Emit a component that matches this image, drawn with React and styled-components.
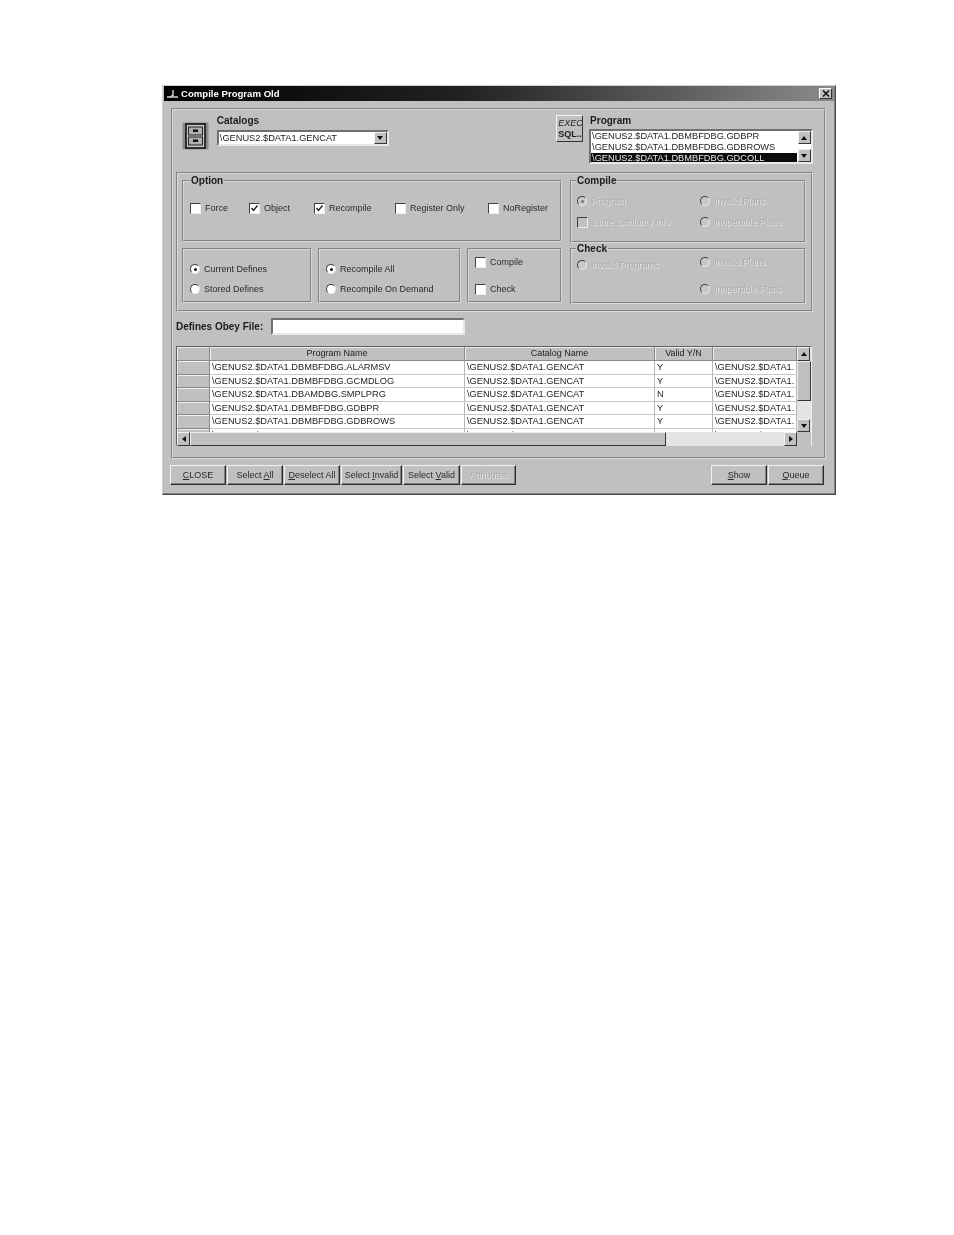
import React from "react";
import styled, { createGlobalStyle } from "styled-components";

const GlobalStyle = createGlobalStyle`
  html, body { margin: 0; background: #fff; }
  body { font-family: "Liberation Sans", Arial, sans-serif; }
`;

const Page = styled.div`
  width: 954px;
  height: 1235px;
  padding: 85px 0 0 162px;
  box-sizing: border-box;
`;

const Dialog = styled.div`
  width: 674px;
  height: 410px;
  box-sizing: border-box;
  background: #c0c0c0;
  border: 1px solid #4a4a4a;
  border-top-color: #d0d0d0;
  border-left-color: #d0d0d0;
  box-shadow: inset -1px -1px 0 #808080;
  padding: 0 1px;
  color: #1c1c1c;
  font-size: 9px;
  filter: blur(0.6px);
`;

const TitleBar = styled.div`
  height: 15px;
  display: flex;
  align-items: center;
  gap: 2px;
  padding: 0 2px;
  background: linear-gradient(90deg, #000 0%, #222 45%, #8a8a8a 100%);
  color: #fff;
  font-size: 9.6px;
  font-weight: 700;
`;

const TitleText = styled.span`
  flex: 1;
`;

const CloseBox = styled.div`
  width: 13px;
  height: 11px;
  background: #c0c0c0;
  border: 1px solid;
  border-color: #fff #333 #333 #fff;
  box-sizing: border-box;
  display: flex;
  align-items: center;
  justify-content: center;
`;

const Panel = styled.div`
  margin: 7px 8px 0 7px;
  height: 351px;
  box-sizing: border-box;
  border: 2px groove #d8d8d8;
  padding: 0 11px 0 3px;
`;

const TopRow = styled.div`
  height: 62px;
  display: flex;
`;

const CabinetSlot = styled.div`
  width: 35px;
  margin: 12px 0 0 6px;
`;

const CatalogBlock = styled.div`
  width: 341px;
  padding-top: 5px;
`;

const FieldLabel = styled.div`
  font-weight: 700;
  font-size: 10px;
  height: 14px;
  line-height: 12px;
`;

const Sunken = styled.div`
  box-sizing: border-box;
  background: #fff;
  border: 2px solid;
  border-color: #707070 #e8e8e8 #e8e8e8 #707070;
`;

const ComboBox = styled(Sunken)`
  width: 172px;
  height: 16px;
  margin-top: 1px;
  display: flex;
  align-items: center;
  padding-left: 1px;
  font-size: 9.25px;
  line-height: 12px;
  white-space: nowrap;
  justify-content: space-between;
`;

const ArrowButton = styled.div`
  width: 13px;
  height: ${(p) => p.$h || 13}px;
  flex: none;
  box-sizing: border-box;
  background: #c0c0c0;
  border: 1px solid;
  border-color: #f0f0f0 #333 #333 #f0f0f0;
  display: flex;
  align-items: center;
  justify-content: center;
`;

const Arrow = styled.span`
  width: 0;
  height: 0;
  border: 3px solid transparent;
  ${(p) => p.$dir === "down" && "border-top: 4px solid #111; border-bottom: 0;"}
  ${(p) => p.$dir === "up" && "border-bottom: 4px solid #111; border-top: 0;"}
  ${(p) => p.$dir === "left" && "border-right: 4px solid #111; border-left: 0;"}
  ${(p) => p.$dir === "right" && "border-left: 4px solid #111; border-right: 0;"}
`;

const ExecButton = styled.div`
  width: 27px;
  height: 27px;
  margin: 5px 7px 0 0;
  box-sizing: border-box;
  border: 1px solid;
  border-color: #f4f4f4 #333 #333 #f4f4f4;
  font-size: 9px;
  line-height: 11px;
  font-weight: 700;
  overflow: hidden;
  white-space: nowrap;
  padding: 2px 0 0 1px;
`;

const ExecTop = styled.div`
  font-style: italic;
  font-weight: 400;
`;

const ProgramBlock = styled.div`
  width: 224px;
  padding-top: 5px;
`;

const ProgramList = styled(Sunken)`
  height: 35px;
  margin-left: -1px;
  display: flex;
  overflow: hidden;
`;

const ProgramLines = styled.div`
  flex: 1;
  min-width: 0;
`;

const ProgramLine = styled.div`
  height: 11px;
  line-height: 11px;
  font-size: 9.25px;
  padding-left: 1px;
  white-space: nowrap;
  background: ${(p) => (p.$selected ? "#0c0c0c" : "transparent")};
  color: ${(p) => (p.$selected ? "#e8e8e8" : "#1c1c1c")};
`;

const ProgramScroll = styled.div`
  width: 14px;
  display: flex;
  flex-direction: column;
  justify-content: space-between;
  align-items: center;
  background: #fff;
`;

const OptionsPanel = styled.div`
  height: 140px;
  box-sizing: border-box;
  border: 2px groove #d8d8d8;
  padding: 1px 4px 0 4px;
  display: grid;
  grid-template-columns: 380px 236px;
  column-gap: 8px;
  align-content: start;
`;

const LeftColumn = styled.div`
  display: flex;
  flex-direction: column;
  gap: 6px;
`;

const RightColumn = styled.div`
  display: flex;
  flex-direction: column;
`;

const Group = styled.fieldset`
  margin: 0;
  min-width: 0;
  box-sizing: border-box;
  height: ${(p) => p.$h}px;
  border: 2px groove #d8d8d8;
  padding: 0 0 0 6px;
`;

const GroupTitle = styled.legend`
  font-weight: 700;
  font-size: 10px;
  line-height: 12px;
  padding: 0 1px;
  margin-left: ${(p) => p.$shift || 0}px;
  color: #1c1c1c;
`;

const OptionRow = styled.div`
  display: flex;
  padding-top: 15px;
`;

const OptionCell = styled.div`
  width: ${(p) => p.$w}px;
  flex: none;
`;

const SubRow = styled.div`
  display: flex;
  gap: 6px;
`;

const SubBox = styled.div`
  width: ${(p) => p.$w}px;
  height: 55px;
  box-sizing: border-box;
  border: 2px groove #d8d8d8;
  padding: ${(p) => p.$top}px 0 0 6px;
  display: flex;
  flex-direction: column;
  gap: ${(p) => p.$gap}px;
`;

const CheckRow = styled.div`
  display: flex;
  align-items: center;
  height: 12px;
  gap: 4px;
  margin-top: ${(p) => p.$drop || 0}px;
  white-space: nowrap;
  color: ${(p) => (p.$off ? "#acacac" : "#2a2a2a")};
  text-shadow: ${(p) => (p.$off ? "1px 1px 0 #e2e2e2" : "none")};
`;

const CheckMark = styled.span`
  width: 11px;
  height: 11px;
  flex: none;
  box-sizing: border-box;
  background: ${(p) => (p.$off ? "#c0c0c0" : "#fff")};
  border: 1px solid;
  border-color: #404040 #eee #eee #404040;
  display: flex;
  align-items: center;
  justify-content: center;
`;

const RadioMark = styled.span`
  width: 10px;
  height: 10px;
  flex: none;
  box-sizing: border-box;
  border-radius: 50%;
  background: ${(p) => (p.$off ? "#c8c8c8" : "#fff")};
  border: 1.5px solid;
  border-color: #404040 #e8e8e8 #e8e8e8 #404040;
  display: flex;
  align-items: center;
  justify-content: center;
`;

const RadioDot = styled.span`
  width: 3px;
  height: 3px;
  border-radius: 50%;
  background: ${(p) => (p.$off ? "#777" : "#111")};
`;

const PlanGrid = styled.div`
  display: grid;
  grid-template-columns: 123px 1fr;
  align-items: start;
  margin-left: -1px;
  row-gap: ${(p) => p.$gap}px;
  padding-top: ${(p) => p.$top}px;
`;

const ObeyRow = styled.div`
  display: flex;
  align-items: center;
  height: 17px;
  margin-top: 6px;
  font-weight: 700;
  font-size: 10px;
  gap: 8px;
`;

const ObeyInput = styled(Sunken)`
  width: 194px;
  height: 17px;
`;

const DataGrid = styled.div`
  width: 636px;
  height: 100px;
  margin-top: 11px;
  box-sizing: border-box;
  border: 1px solid;
  border-color: #606060 #eee #eee #606060;
  display: grid;
  grid-template-columns: 620px 14px;
  grid-template-rows: 85px 14px;
`;

const GridBody = styled.div`
  overflow: hidden;
  background: #fff;
`;

const GridRow = styled.div`
  display: grid;
  grid-template-columns: 33px 255px 190px 58px 84px;
  height: ${(p) => (p.$head ? 14 : 13.5)}px;
  box-sizing: border-box;
`;

const HeadCell = styled.div`
  background: #c0c0c0;
  box-sizing: border-box;
  border-right: 1px solid #8a8a8a;
  border-bottom: 1px solid #8a8a8a;
  box-shadow: inset 1px 1px 0 #eee;
  text-align: center;
  line-height: 13px;
  white-space: nowrap;
  overflow: hidden;
`;

const DataCell = styled.div`
  box-sizing: border-box;
  border-right: 1px solid #b8b8b8;
  border-bottom: 1px solid #c8c8c8;
  padding-left: 2px;
  font-size: 9.25px;
  line-height: 12px;
  white-space: nowrap;
  overflow: hidden;
`;

const VScroll = styled.div`
  display: flex;
  flex-direction: column;
  background: #e4e4e4;
`;

const VThumb = styled.div`
  height: 40px;
  box-sizing: border-box;
  background: #c0c0c0;
  border: 1px solid;
  border-color: #eee #333 #333 #eee;
`;

const HScroll = styled.div`
  display: flex;
  background: #e4e4e4;
  justify-content: space-between;
`;

const HThumb = styled.div`
  width: 476px;
  box-sizing: border-box;
  background: #c0c0c0;
  border: 1px solid;
  border-color: #eee #333 #333 #eee;
  margin-right: auto;
`;

const Spacer = styled.div`
  flex: 1;
`;

const Corner = styled.div`
  background: #c0c0c0;
`;

const ButtonBar = styled.div`
  display: flex;
  margin: 6px 9px 0 6px;
`;

const ActionButton = styled.div`
  width: ${(p) => p.$w}px;
  height: 20px;
  box-sizing: border-box;
  margin-right: 1px;
  border: 1px solid;
  border-color: #f0f0f0 #2a2a2a #2a2a2a #f0f0f0;
  box-shadow: inset -1px -1px 0 #808080;
  display: flex;
  align-items: center;
  justify-content: center;
  white-space: nowrap;
  color: ${(p) => (p.$off ? "#acacac" : "#2a2a2a")};
  text-shadow: ${(p) => (p.$off ? "1px 1px 0 #e2e2e2" : "none")};
  u { text-underline-offset: 1px; }
`;

const programs = [
  "\\GENUS2.$DATA1.DBMBFDBG.GDBPR",
  "\\GENUS2.$DATA1.DBMBFDBG.GDBROWS",
  "\\GENUS2.$DATA1.DBMBFDBG.GDCOLL",
];

const rows = [
  ["\\GENUS2.$DATA1.DBMBFDBG.ALARMSV", "Y"],
  ["\\GENUS2.$DATA1.DBMBFDBG.GCMDLOG", "Y"],
  ["\\GENUS2.$DATA1.DBAMDBG.SMPLPRG", "N"],
  ["\\GENUS2.$DATA1.DBMBFDBG.GDBPR", "Y"],
  ["\\GENUS2.$DATA1.DBMBFDBG.GDBROWS", "Y"],
  ["\\GENUS2.$DATA1.DBMBFDBG.GDCOLL", "N"],
];

const Check = ({ label, checked, off }) => (
  <CheckRow $off={off}>
    <CheckMark $off={off}>
      {checked && (
        <svg width="9" height="9" viewBox="0 0 9 9">
          <path d="M1.5 4 L3.5 6.5 L7.5 1.5" fill="none" stroke="#222" strokeWidth="1.4" />
        </svg>
      )}
    </CheckMark>
    {label}
  </CheckRow>
);

const Radio = ({ label, checked, off, drop }) => (
  <CheckRow $off={off} $drop={drop}>
    <RadioMark $off={off}>{checked && <RadioDot $off={off} />}</RadioMark>
    {label}
  </CheckRow>
);

const Cabinet = () => (
  <svg width="27" height="28" viewBox="0 0 27 28">
    <rect x="0.5" y="0.5" width="26" height="27" fill="#8c8c8c" />
    <rect x="4" y="2" width="19" height="24" fill="#c8c8c8" stroke="#111" strokeWidth="1.6" />
    <rect x="6.5" y="5" width="14" height="8" fill="#b0b0b0" stroke="#222" />
    <rect x="6.5" y="15" width="14" height="8" fill="#b0b0b0" stroke="#222" />
    <rect x="11" y="7.5" width="5" height="2.5" fill="#111" />
    <rect x="11" y="17.5" width="5" height="2.5" fill="#111" />
  </svg>
);

const TitleIcon = () => (
  <svg width="13" height="11" viewBox="0 0 13 11">
    <path d="M1 9 H12 M7 2 V8 M4 9 L7 7" fill="none" stroke="#d8d8d8" strokeWidth="1.4" />
  </svg>
);

const CloseIcon = () => (
  <svg width="8" height="7" viewBox="0 0 8 7">
    <path d="M1 0.5 L7 6.5 M7 0.5 L1 6.5" stroke="#111" strokeWidth="1.5" />
  </svg>
);

const App = () => {
  return (
    <Page>
      <GlobalStyle />
      <Dialog>
        <TitleBar>
          <TitleIcon />
          <TitleText>Compile Program Old</TitleText>
          <CloseBox>
            <CloseIcon />
          </CloseBox>
        </TitleBar>

        <Panel>
          {/* Catalog and program pickers */}
          <TopRow>
            <CabinetSlot>
              <Cabinet />
            </CabinetSlot>
            <CatalogBlock>
              <FieldLabel>Catalogs</FieldLabel>
              <ComboBox>
                \GENUS2.$DATA1.GENCAT
                <ArrowButton $h={12}>
                  <Arrow $dir="down" />
                </ArrowButton>
              </ComboBox>
            </CatalogBlock>
            <ExecButton>
              <ExecTop>EXEC</ExecTop>
              SQL..
            </ExecButton>
            <ProgramBlock>
              <FieldLabel>Program</FieldLabel>
              <ProgramList>
                <ProgramLines>
                  {programs.map((p, i) => (
                    <ProgramLine key={p} $selected={i === 2}>
                      {p}
                    </ProgramLine>
                  ))}
                </ProgramLines>
                <ProgramScroll>
                  <ArrowButton>
                    <Arrow $dir="up" />
                  </ArrowButton>
                  <ArrowButton>
                    <Arrow $dir="down" />
                  </ArrowButton>
                </ProgramScroll>
              </ProgramList>
            </ProgramBlock>
          </TopRow>

          {/* Options */}
          <OptionsPanel>
            <LeftColumn>
              <Group $h={67}>
                <GroupTitle>Option</GroupTitle>
                <OptionRow>
                  <OptionCell $w={59}><Check label="Force" /></OptionCell>
                  <OptionCell $w={65}><Check label="Object" checked /></OptionCell>
                  <OptionCell $w={81}><Check label="Recompile" checked /></OptionCell>
                  <OptionCell $w={93}><Check label="Register Only" /></OptionCell>
                  <OptionCell $w={70}><Check label="NoRegister" /></OptionCell>
                </OptionRow>
              </Group>
              <SubRow>
                <SubBox $w={130} $top={13} $gap={8}>
                  <Radio label="Current Defines" checked />
                  <Radio label="Stored Defines" />
                </SubBox>
                <SubBox $w={143} $top={13} $gap={8}>
                  <Radio label="Recompile All" checked />
                  <Radio label="Recompile On Demand" />
                </SubBox>
                <SubBox $w={95} $top={6} $gap={15}>
                  <Check label="Compile" />
                  <Check label="Check" />
                </SubBox>
              </SubRow>
            </LeftColumn>

            <RightColumn>
              <Group $h={68}>
                <GroupTitle $shift={-2}>Compile</GroupTitle>
                <PlanGrid $top={8} $gap={9}>
                  <Radio label="Program" checked off />
                  <Radio label="Invalid Plans" off />
                  <Check label="Store Similarity Info" off />
                  <Radio label="Inoperable Plans" off />
                </PlanGrid>
              </Group>
              <Group $h={61}>
                <GroupTitle $shift={-2}>Check</GroupTitle>
                <PlanGrid $top={1} $gap={12}>
                  <Radio label="Invalid Programs" off drop={3} />
                  <Radio label="Invalid Plans" off />
                  <span />
                  <Radio label="Inoperable Plans" off />
                </PlanGrid>
              </Group>
            </RightColumn>
          </OptionsPanel>

          <ObeyRow>
            Defines Obey File:
            <ObeyInput />
          </ObeyRow>

          {/* Program table */}
          <DataGrid>
            <GridBody>
              <GridRow $head>
                <HeadCell />
                <HeadCell>Program Name</HeadCell>
                <HeadCell>Catalog Name</HeadCell>
                <HeadCell>Valid Y/N</HeadCell>
                <HeadCell />
              </GridRow>
              {rows.map(([name, valid]) => (
                <GridRow key={name}>
                  <HeadCell />
                  <DataCell>{name}</DataCell>
                  <DataCell>\GENUS2.$DATA1.GENCAT</DataCell>
                  <DataCell>{valid}</DataCell>
                  <DataCell>\GENUS2.$DATA1.</DataCell>
                </GridRow>
              ))}
            </GridBody>
            <VScroll>
              <ArrowButton $h={14}>
                <Arrow $dir="up" />
              </ArrowButton>
              <VThumb />
              <Spacer />
              <ArrowButton $h={13}>
                <Arrow $dir="down" />
              </ArrowButton>
            </VScroll>
            <HScroll>
              <ArrowButton $h={14}>
                <Arrow $dir="left" />
              </ArrowButton>
              <HThumb />
              <ArrowButton $h={14}>
                <Arrow $dir="right" />
              </ArrowButton>
            </HScroll>
            <Corner />
          </DataGrid>
        </Panel>

        <ButtonBar>
          <ActionButton $w={56}><span><u>C</u>LOSE</span></ActionButton>
          <ActionButton $w={56}><span>Select <u>A</u>ll</span></ActionButton>
          <ActionButton $w={56}><span><u>D</u>eselect All</span></ActionButton>
          <ActionButton $w={61}><span>Select <u>I</u>nvalid</span></ActionButton>
          <ActionButton $w={57}><span>Select <u>V</u>alid</span></ActionButton>
          <ActionButton $w={55} $off>Attributes</ActionButton>
          <Spacer />
          <ActionButton $w={56}><span><u>S</u>how</span></ActionButton>
          <ActionButton $w={56}><span><u>Q</u>ueue</span></ActionButton>
        </ButtonBar>
      </Dialog>
    </Page>
  );
};

export default App;
